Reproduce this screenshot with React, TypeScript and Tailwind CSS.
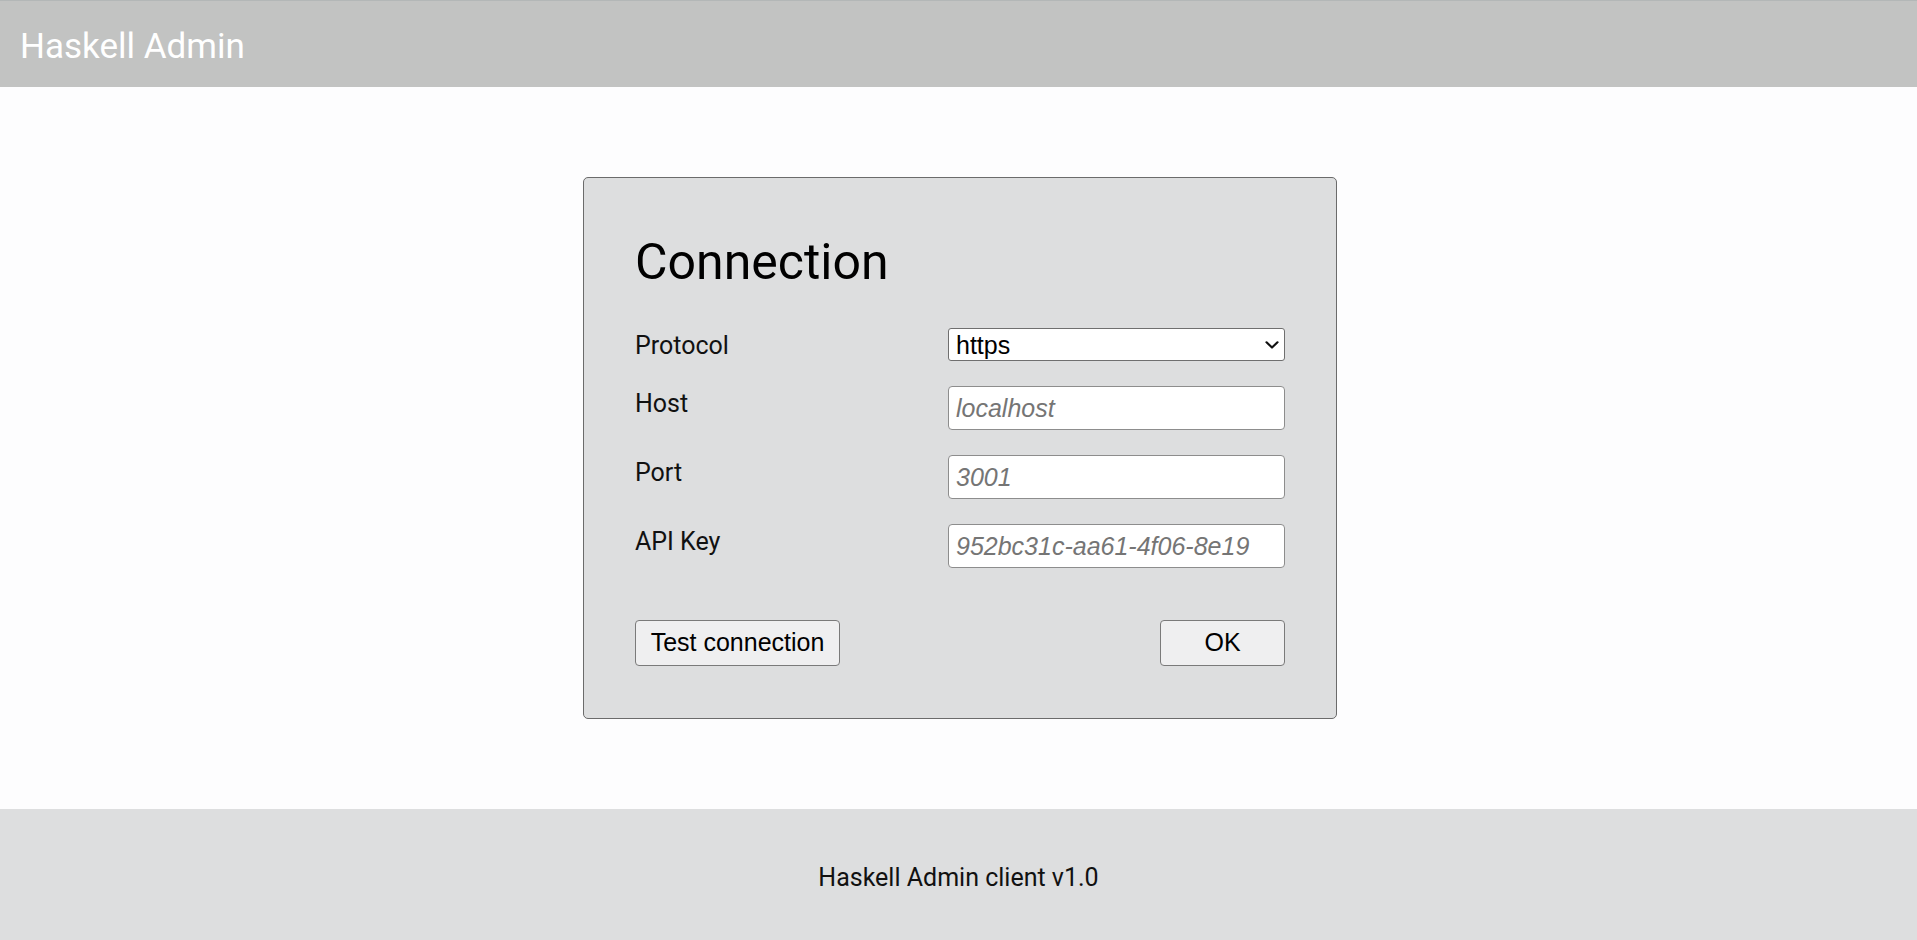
import { useState } from "react";

function Chevron() {
  return (
    <svg
      className="pointer-events-none absolute right-[6px] top-1/2 -translate-y-1/2"
      width="14"
      height="9"
      viewBox="0 0 14 9"
      fill="none"
    >
      <path d="M1.5 1.8 L7 7 L12.5 1.8" stroke="#111" strokeWidth="2.2" strokeLinecap="round" strokeLinejoin="round" />
    </svg>
  );
}

function FieldRow({ label, children }: { label: string; children: React.ReactNode }) {
  return (
    <div className="flex items-start">
      <label className="w-[313px] pt-[3px] text-[25px] leading-[29px] text-[#111]">{label}</label>
      <div className="w-[337px]">{children}</div>
    </div>
  );
}

function TextField({ placeholder }: { placeholder: string }) {
  return (
    <input
      type="text"
      placeholder={placeholder}
      className="block h-[44px] w-full rounded-[4px] border border-[#8d8d8d] bg-white px-[7px] font-['Liberation_Sans',Arial,sans-serif] text-[25px] text-black outline-none placeholder:italic placeholder:text-[#757575]"
    />
  );
}

export default function App() {
  const [protocol, setProtocol] = useState("https");

  return (
    <div className="flex min-h-screen flex-col bg-[#fdfdfe] font-['Roboto',Arial,sans-serif]">
      <header className="h-[87px] border-t border-[#b3b7b7] bg-[#c2c3c2] pl-[20px] pt-[25px]">
        <h1 className="text-[35px] leading-[41px] text-white">Haskell Admin</h1>
      </header>

      <main className="flex flex-1 items-center justify-center pl-[3px]">
        <div className="h-[542px] w-[754px] rounded-[5px] border border-[#6b6b6b] bg-[#dddedf] px-[51px] pt-[55px]">
          <h2 className="text-[50px] leading-[58px] text-black">Connection</h2>

          <div className="mt-[37px] flex flex-col gap-[25px]">
            <FieldRow label="Protocol">
              <div className="relative">
                <select
                  value={protocol}
                  onChange={(e) => setProtocol(e.target.value)}
                  className="block h-[33px] w-full appearance-none rounded-[3px] border border-[#6f6f6f] bg-white pl-[7px] font-['Liberation_Sans',Arial,sans-serif] text-[25px] leading-[28px] text-black outline-none"
                >
                  <option value="https">https</option>
                  <option value="http">http</option>
                </select>
                <Chevron />
              </div>
            </FieldRow>
            <FieldRow label="Host">
              <TextField placeholder="localhost" />
            </FieldRow>
            <FieldRow label="Port">
              <TextField placeholder="3001" />
            </FieldRow>
            <FieldRow label="API Key">
              <TextField placeholder="952bc31c-aa61-4f06-8e19" />
            </FieldRow>
          </div>

          <div className="mt-[52px] flex justify-between font-['Liberation_Sans',Arial,sans-serif] text-[25px] text-black">
            <button className="h-[46px] w-[205px] rounded-[4px] border border-[#7a7a7a] bg-[#efeff0]">
              Test connection
            </button>
            <button className="h-[46px] w-[125px] rounded-[4px] border border-[#7a7a7a] bg-[#efeff0]">
              OK
            </button>
          </div>
        </div>
      </main>

      <footer className="flex h-[131px] items-center justify-center bg-[#dddedf] pt-[5px] text-[25px] leading-[29px] text-[#111]">
        Haskell Admin client v1.0
      </footer>
    </div>
  );
}
